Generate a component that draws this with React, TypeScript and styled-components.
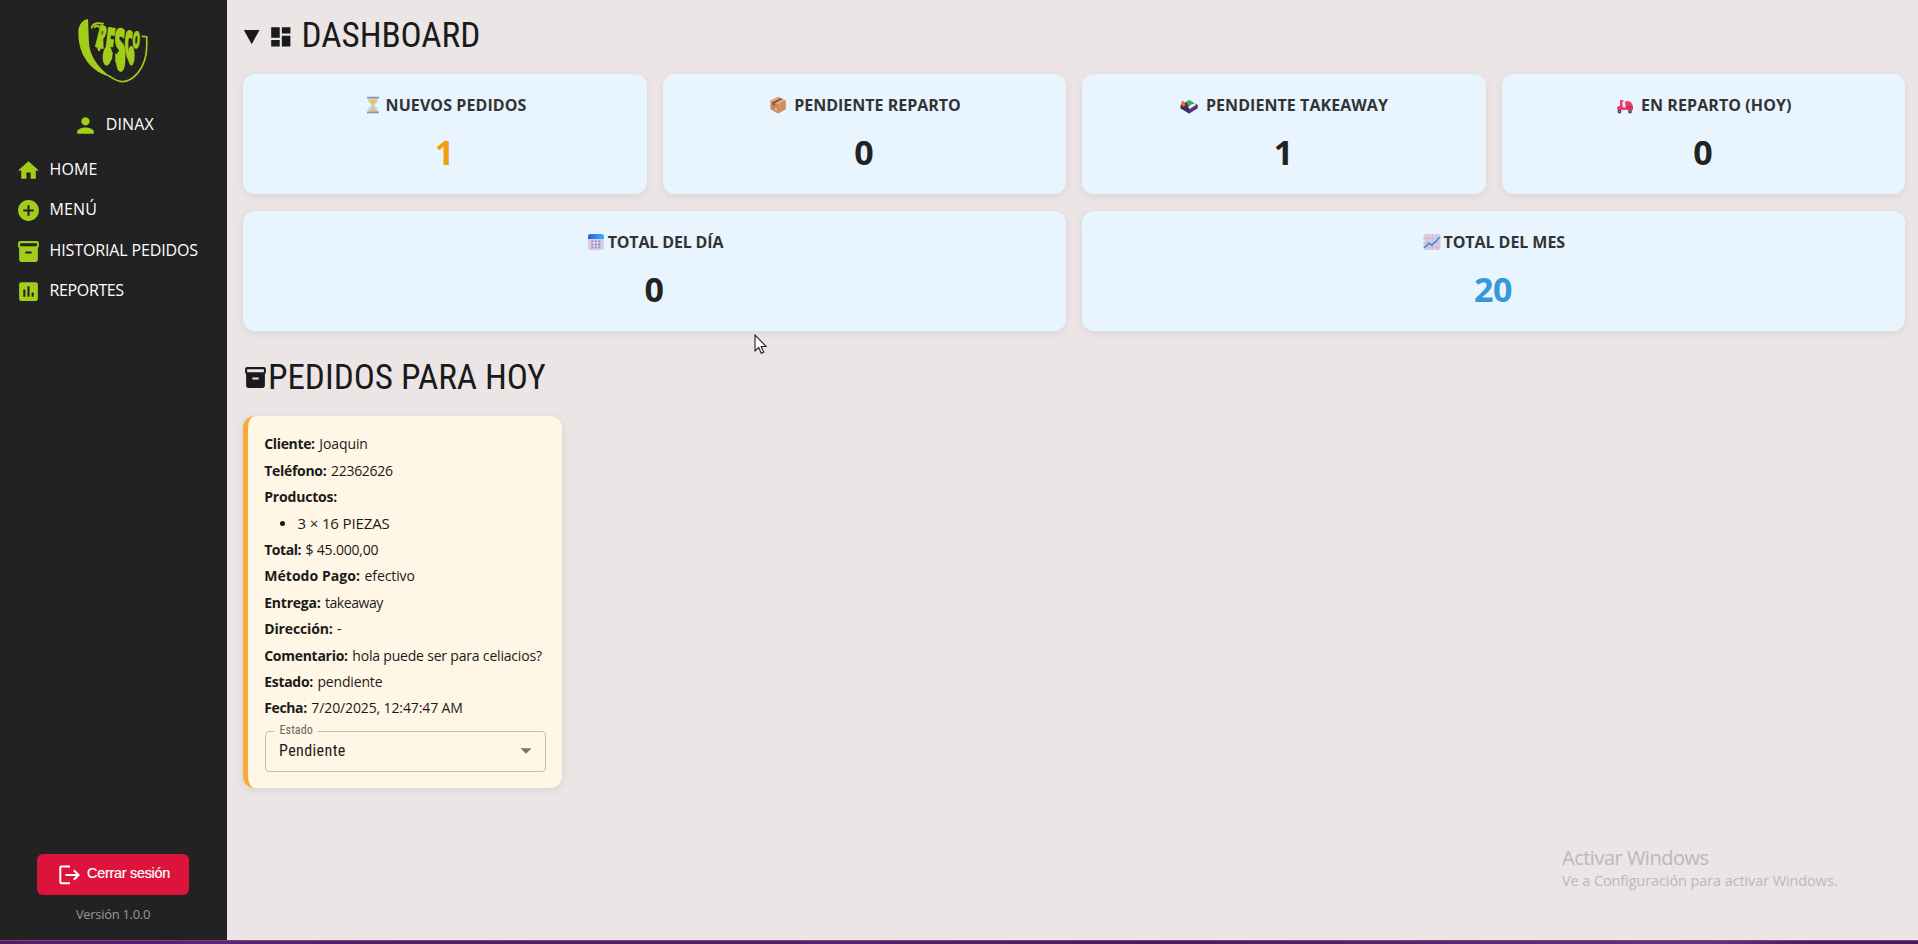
import React from 'react';
import styled, { createGlobalStyle } from 'styled-components';
import { MdHome, MdAddCircle, MdPerson, MdInventory2, MdAssessment, MdDashboard } from 'react-icons/md';

const GlobalStyle = createGlobalStyle`
  * { box-sizing: border-box; }
  body { margin: 0; overflow: hidden; background: #ebe5e5; font-family: "Open Sans", sans-serif; color: #1a1a1a; }
`;

const Screen = styled.div`
  display: flex;
  flex-direction: column;
  height: 944px;
`;
const Shell = styled.div`
  display: flex;
  flex: 1;
  min-height: 0;
`;
const Taskbar = styled.div`
  height: 4px;
  border-top: 1px solid #74497f;
  background: linear-gradient(90deg, #561a66 0%, #5d2176 11%, #561a66 22%, #5a1e6e 45%, #4f165f 60%, #652a7c 84%, #6b2f82 89%, #551762 94%, #50145c 100%);
`;

/* Sidebar */
const Sidebar = styled.aside`
  display: flex;
  flex-direction: column;
  align-items: center;
  width: 227px;
  background: #222;
  color: #fff;
`;
const Logo = styled.svg`
  display: block;
  width: 110px;
  height: 90px;
  margin: 5px 0 0 3px;
  flex: none;
`;
const LogoLetter = styled.text`
  font: 800 100px "Open Sans", sans-serif;
  fill: #a3cd1b;
  stroke: #a3cd1b;
  stroke-width: 0.9px;
  vector-effect: non-scaling-stroke;
  stroke-linejoin: round;
`;
const User = styled.div`
  display: flex;
  align-items: center;
  gap: 7.5px;
  height: 34px;
  margin: 13.5px 0 0 0;
  svg { width: 25px; height: 25px; color: #a3cd1b; }
`;
const Nav = styled.nav`
  display: flex;
  flex-direction: column;
  width: 100%;
  margin-top: 7.8px;
  padding-left: 16px;
`;
const NavItem = styled.a`
  display: flex;
  align-items: center;
  gap: 8.6px;
  height: 40.4px;
  svg { width: 25px; height: 25px; color: #a3cd1b; }
`;
const NavLabel = styled.span<{ $track: number }>`
  padding-bottom: 3px;
  font-size: 16px;
  line-height: 22px;
  white-space: nowrap;
  letter-spacing: ${p => p.$track}px;
`;
const Logout = styled.button`
  display: flex;
  align-items: center;
  gap: 7px;
  width: 152px;
  height: 41px;
  margin: auto 1px 0 0;
  padding: 0 0 0 22px;
  border: 0;
  border-radius: 6px;
  background: #dc143c;
  color: #fff;
  font: 14.4px "Liberation Sans", Arial, sans-serif;
  letter-spacing: -0.26px;
  -webkit-text-stroke: 0.2px #fff;
  white-space: nowrap;
  span { padding-bottom: 3px; }
`;
const Version = styled.div`
  margin: 9px 1px 16px 0;
  color: #999;
  font-size: 13px;
  line-height: 20px;
  letter-spacing: -0.3px;
`;

/* Main area */
const Main = styled.main`
  position: relative;
  flex: 1;
  padding: 0 13px 0 16px;
`;
const SectionTitle = styled.h1<{ $height: number; $top?: number; $gap: number; $lift?: number }>`
  display: flex;
  align-items: center;
  gap: ${p => p.$gap}px;
  height: ${p => p.$height}px;
  margin: 0;
  padding-top: ${p => p.$top ?? 0}px;
  font: 400 35.2px "Roboto Condensed", Roboto, sans-serif;
  letter-spacing: -0.06px;
  color: #1a1a1a;
  svg { flex: none; }
  span { padding-bottom: ${p => p.$lift ?? 0}px; }
`;
const StatRow = styled.div<{ $cols: number }>`
  display: grid;
  grid-template-columns: repeat(${p => p.$cols}, 1fr);
  gap: 16px;
  & + & { margin-top: 17px; }
`;
const StatCard = styled.section`
  height: 120px;
  padding-top: 20px;
  border-radius: 12px;
  background: #e8f5ff;
  box-shadow: 0 2px 8px rgba(0, 0, 0, 0.07);
  text-align: center;
`;
const StatTitle = styled.h2<{ $gap: number; $track: number }>`
  display: flex;
  justify-content: center;
  align-items: center;
  gap: ${p => p.$gap}px;
  margin: 0 1px 0 0;
  font-size: 16px;
  font-weight: 700;
  line-height: 22px;
  letter-spacing: ${p => p.$track}px;
  color: #333;
`;
const StatValue = styled.div<{ $color?: string }>`
  margin: 13px 1px 0 0;
  font-size: 34px;
  font-weight: 700;
  line-height: 46px;
  letter-spacing: -0.4px;
  color: ${p => p.$color ?? '#222'};
`;
const Emoji = styled.svg`
  width: 22px;
  height: 18px;
  flex: none;
`;

/* Order card */
const OrderCard = styled.article`
  width: 319px;
  height: 372px;
  padding: 15.4px 16px 0 17px;
  border-left: 5px solid #f9a93a;
  border-radius: 12px;
  background: #fff6e5;
  box-shadow: 0 2px 8px rgba(0, 0, 0, 0.09);
`;
const Field = styled.p`
  display: flex;
  gap: 4.5px;
  margin: 0 0 0 -0.8px;
  height: 26.4px;
  font-size: 14px;
  line-height: 26.4px;
  white-space: nowrap;
`;
const FieldName = styled.strong<{ $track: number }>`
  font-weight: 700;
  letter-spacing: ${p => p.$track}px;
`;
const FieldValue = styled.span<{ $track: number }>`
  letter-spacing: ${p => p.$track}px;
`;
const Products = styled.ul`
  margin: 0;
  padding: 0 0 0 15px;
  list-style: none;
`;
const Product = styled.li`
  display: flex;
  align-items: center;
  gap: 12.5px;
  height: 26.4px;
  padding-bottom: 1px;
  font-size: 15px;
  letter-spacing: -0.13px;
  &::before { content: ""; width: 5px; height: 5px; border-radius: 50%; background: #1a1a1a; }
`;
const Select = styled.div`
  position: relative;
  display: flex;
  align-items: center;
  justify-content: space-between;
  height: 41px;
  margin-top: 9.2px;
  padding: 0 13px 1px 13px;
  border: 1px solid #c5beb1;
  border-radius: 4px;
  font: 16px "Roboto Condensed", Roboto, sans-serif;
  letter-spacing: 0.4px;
`;
const SelectLabel = styled.span`
  position: absolute;
  top: -9px;
  left: 8px;
  padding: 0 5.5px;
  background: #fff6e5;
  color: #6b6760;
  font-size: 12px;
  line-height: 14px;
  letter-spacing: 0.1px;
`;

/* Overlays */
const Watermark = styled.div`
  position: absolute;
  left: 1335px;
  top: 845px;
  color: #bcb8b8;
  white-space: nowrap;
`;
const WatermarkTitle = styled.div`
  font-size: 20px;
  line-height: 25px;
  letter-spacing: -0.5px;
`;
const WatermarkText = styled.div`
  font-size: 14.5px;
  line-height: 21px;
  letter-spacing: -0.1px;
`;
const Cursor = styled.svg`
  position: absolute;
  left: 527px;
  top: 334px;
  width: 13px;
  height: 21px;
`;

const Hourglass = () => (
  <Emoji viewBox="0 0 22 18">
    <path d="M6 2h10v3.5L12.3 9 16 12.5V16H6v-3.500L9.700 9 6 5.500z" fill="#c3dcea" />
    <path d="M7.300 4h7.400v1.500L11.500 8.600v3L14.500 15h-7l3-3.500v-3L7.300 5.500z" fill="#f5bd56" />
    <path d="M5 .8h12v1.800H5zM5 15.500h12v1.800H5z" fill="#8f9498" />
  </Emoji>
);
const Box = () => (
  <Emoji viewBox="0 0 22 18">
    <path d="M11 .8l7.600 3.700v8.800L11 17.500l-7.600-4.200V4.500z" fill="#c98a5e" />
    <path d="M11 .8l7.600 3.700L11 8.500 3.400 4.500z" fill="#e0ae83" />
    <path d="M11 8.500l7.600-4v8.800L11 17.500z" fill="#d0905f" />
    <path d="M13.500 2l2.200 1.100-7.900 4.200v2.800l-2.300-1.300V6z" fill="#87573f" />
    <path d="M8.200 12l1.600.8v2l-1.600-.9z" fill="#e7d5df" />
  </Emoji>
);
const Bento = () => (
  <Emoji viewBox="0 0 22 18">
    <path d="M2.500 9l8.500-4.500L19.500 9v3.200L11 17.500l-8.500-5z" fill="#3f2f5c" />
    <path d="M11 12l8.500-3v3.200L11 17.500z" fill="#55387a" />
    <path d="M3.500 5.500l2.600-.5 1.300 4.500-2 1.200-2.100-1.700z" fill="#ee6a45" />
    <path d="M8 6l3-2 4 2-1.500 3-3.500.5z" fill="#46ad4d" />
    <path d="M10 10.500L16 7l2 2-6.500 4z" fill="#f4eef7" />
  </Emoji>
);
const Scooter = () => (
  <Emoji viewBox="0 0 22 18">
    <path d="M6 4h3.500v1.500H8.300l.5 5.500 3 .5-1-5.500c2.500-2 6-.5 7 1.500 1.200 2.500 1.400 4 1.200 6.500H4.500c-1 0-1.700-.7-1.500-2 .3-1.300 1.500-2 3-2.200z" fill="#f03c70" />
    <path d="M12 9.500h6.500l.4 3H12z" fill="#de2c52" />
    <circle cx="5.500" cy="15.500" r="1.900" fill="#553a64" /><circle cx="16" cy="15.500" r="1.900" fill="#553a64" />
    <circle cx="5.500" cy="15.500" r=".6" fill="#cfc4da" /><circle cx="16" cy="15.500" r=".6" fill="#cfc4da" />
  </Emoji>
);
const Calendar = () => (
  <Emoji viewBox="0 0 22 18">
    <defs><linearGradient id="cal"><stop offset="0" stopColor="#3659d8" /><stop offset=".5" stopColor="#2c8df2" /><stop offset="1" stopColor="#36b2f8" /></linearGradient></defs>
    <rect x="3" y="1" width="16" height="16.200" rx="2.500" fill="#ddcdea" />
    <path d="M3 6V3.500A2.500 2.500 0 0 1 5.500 1h11A2.500 2.500 0 0 1 19 3.500V6z" fill="url(#cal)" />
    {[7.4, 10.6, 13.6].map(y => [6.3, 9.8, 13.3].map(x => (
      <rect key={`${x}-${y}`} x={x} y={y} width="2" height="1.800" fill={x > 13 && y > 10 && y < 11 ? '#2c8df2' : '#9c8ab0'} />
    )))}
  </Emoji>
);
const Chart = () => (
  <Emoji viewBox="0 0 22 18">
    <rect x="2.500" y="1" width="17" height="16" rx="1.500" fill="#dccfe4" />
    <path d="M2.500 5.500h17M2.500 10h17M2.500 14h17M7 1v16M11.500 1v16M16 1v16" stroke="#c8b6d2" strokeWidth=".8" />
    <path d="M3 15l5-4.800 3 2L19 4" fill="none" stroke="#3b93dc" strokeWidth="1.700" />
  </Emoji>
);

const nav = [
  { icon: <MdHome />, label: 'HOME', track: 0.1 },
  { icon: <MdAddCircle />, label: 'MENÚ', track: 0.1 },
  { icon: <MdInventory2 />, label: 'HISTORIAL PEDIDOS', track: -0.14 },
  { icon: <MdAssessment />, label: 'REPORTES', track: -0.38 },
];
const today = [
  { icon: <Hourglass />, title: 'NUEVOS PEDIDOS', value: 1, color: '#f39c12', gap: 1.5, track: 0.08 },
  { icon: <Box />, title: 'PENDIENTE REPARTO', value: 0, gap: 5.5, track: 0 },
  { icon: <Bento />, title: 'PENDIENTE TAKEAWAY', value: 1, gap: 5.5, track: 0.06 },
  { icon: <Scooter />, title: 'EN REPARTO (HOY)', value: 0, gap: 5, track: 0.08 },
];
const totals = [
  { icon: <Calendar />, title: 'TOTAL DEL DÍA', value: 0, gap: 1, track: -0.16 },
  { icon: <Chart />, title: 'TOTAL DEL MES', value: 20, color: '#3498db', gap: 0.5, track: -0.06 },
];
type Entry = [name: string, nameTrack: number, value: string, valueTrack: number];
const customer: Entry[] = [
  ['Cliente:', -0.34, 'Joaquin', -0.1],
  ['Teléfono:', -0.3, '22362626', -0.26],
  ['Productos:', -0.18, '', 0],
];
const details: Entry[] = [
  ['Total:', -0.45, '$ 45.000,00', -0.2],
  ['Método Pago:', 0.05, 'efectivo', -0.1],
  ['Entrega:', -0.23, 'takeaway', -0.45],
  ['Dirección:', -0.14, '-', 0],
  ['Comentario:', -0.28, 'hola puede ser para celiacios?', -0.19],
  ['Estado:', -0.3, 'pendiente', -0.17],
  ['Fecha:', -0.36, '7/20/2025, 12:47:47 AM', -0.12],
];

const Stat = ({ icon, title, value, color, gap, track }: { icon: React.ReactNode; title: string; value: number; color?: string; gap: number; track: number }) => (
  <StatCard>
    <StatTitle $gap={gap} $track={track}>{icon}<span>{title}</span></StatTitle>
    <StatValue $color={color}>{value}</StatValue>
  </StatCard>
);
const Entries = ({ items }: { items: Entry[] }) => (
  <>
    {items.map(([name, nameTrack, value, valueTrack]) => (
      <Field key={name}>
        <FieldName $track={nameTrack}>{name}</FieldName>
        {value && <FieldValue $track={valueTrack}>{value}</FieldValue>}
      </Field>
    ))}
  </>
);

export default function App() {
  return (
    <Screen>
      <GlobalStyle />
      <Shell>
        <Sidebar>
          <Logo viewBox="0 0 330 270">
            <path d="M84 42C68 44 56 60 55 78c-1 26 4 50 13 70 17 34 46 60 84 67-30-20-54-50-62-82-5-20-4-66-6-91z" fill="#a3cd1b" />
            <path d="M145 211c14 10 24 19 45 19 30-3 54-34 64-65 8-25 7-48 6-70l-15-1" fill="none" stroke="#a3cd1b" strokeWidth="5" />
            <path d="M95 68c4-14 15-16 34-12M104 66c4-4 10-3 14 0" fill="none" stroke="#a3cd1b" strokeWidth="6" strokeLinecap="round" />
            <g fill="#a3cd1b">
              <ellipse cx="117" cy="120" rx="6" ry="19" />
              <ellipse cx="142" cy="152" rx="14" ry="30" transform="rotate(6 142 152)" />
              <ellipse cx="182" cy="168" rx="14" ry="33" />
              <ellipse cx="214" cy="152" rx="10" ry="30" />
            </g>
            <LogoLetter transform="translate(103 124) rotate(14) scale(.40 .92)">R</LogoLetter>
            <LogoLetter transform="translate(130 160) rotate(7) scale(.50 1.300)">E</LogoLetter>
            <LogoLetter transform="translate(164 176) rotate(-1) scale(.58 1.460)">S</LogoLetter>
            <LogoLetter transform="translate(196 168) rotate(-3) scale(.42 1.250)">C</LogoLetter>
            <LogoLetter transform="translate(216 128) rotate(4) scale(.28 .68)">O</LogoLetter>
          </Logo>
          <User><MdPerson /><NavLabel $track={0.1}>DINAX</NavLabel></User>
          <Nav>
            {nav.map(item => (
              <NavItem key={item.label}>{item.icon}<NavLabel $track={item.track}>{item.label}</NavLabel></NavItem>
            ))}
          </Nav>
          <Logout>
            <svg width="21" height="20" viewBox="0 0 21 20" fill="none" stroke="#fff" strokeWidth="2">
              <path d="M11 1.500H2.300q-1 0-1 1v14.800q0 1 1 1H11" />
              <path d="M6.500 10H19.500M14.800 5.200L19.600 10l-4.800 4.800" />
            </svg>
            <span>Cerrar sesión</span>
          </Logout>
          <Version>Versión 1.0.0</Version>
        </Sidebar>
        <Main>
          <SectionTitle $height={74} $gap={8} $lift={4}>
            <svg width="17" height="16" viewBox="0 0 17 16"><path d="M.8 1h15.700L8.700 15.300z" fill="#1a1a1a" /></svg>
            <MdDashboard size={25.600} />
            <span>DASHBOARD</span>
          </SectionTitle>
          <StatRow $cols={4}>{today.map(s => <Stat key={s.title} {...s} />)}</StatRow>
          <StatRow $cols={2}>{totals.map(s => <Stat key={s.title} {...s} />)}</StatRow>
          <SectionTitle $height={85} $top={7} $gap={-1}>
            <MdInventory2 size={25} />
            <span>PEDIDOS PARA HOY</span>
          </SectionTitle>
          <OrderCard>
            <Entries items={customer} />
            <Products><Product>3 × 16 PIEZAS</Product></Products>
            <Entries items={details} />
            <Select>
              <SelectLabel>Estado</SelectLabel>
              <span>Pendiente</span>
              <svg width="12" height="6" viewBox="0 0 12 6"><path d="M.5.300h11L6 5.800z" fill="#77736b" /></svg>
            </Select>
          </OrderCard>
          <Watermark>
            <WatermarkTitle>Activar Windows</WatermarkTitle>
            <WatermarkText>Ve a Configuración para activar Windows.</WatermarkText>
          </Watermark>
          <Cursor viewBox="0 0 13 21">
            <path d="M1 1v16l3.700-3.500 2.500 5.800 2.500-1.100-2.500-5.700h5z" fill="#fff" stroke="#222" strokeWidth="1.100" />
          </Cursor>
        </Main>
      </Shell>
      <Taskbar />
    </Screen>
  );
}
